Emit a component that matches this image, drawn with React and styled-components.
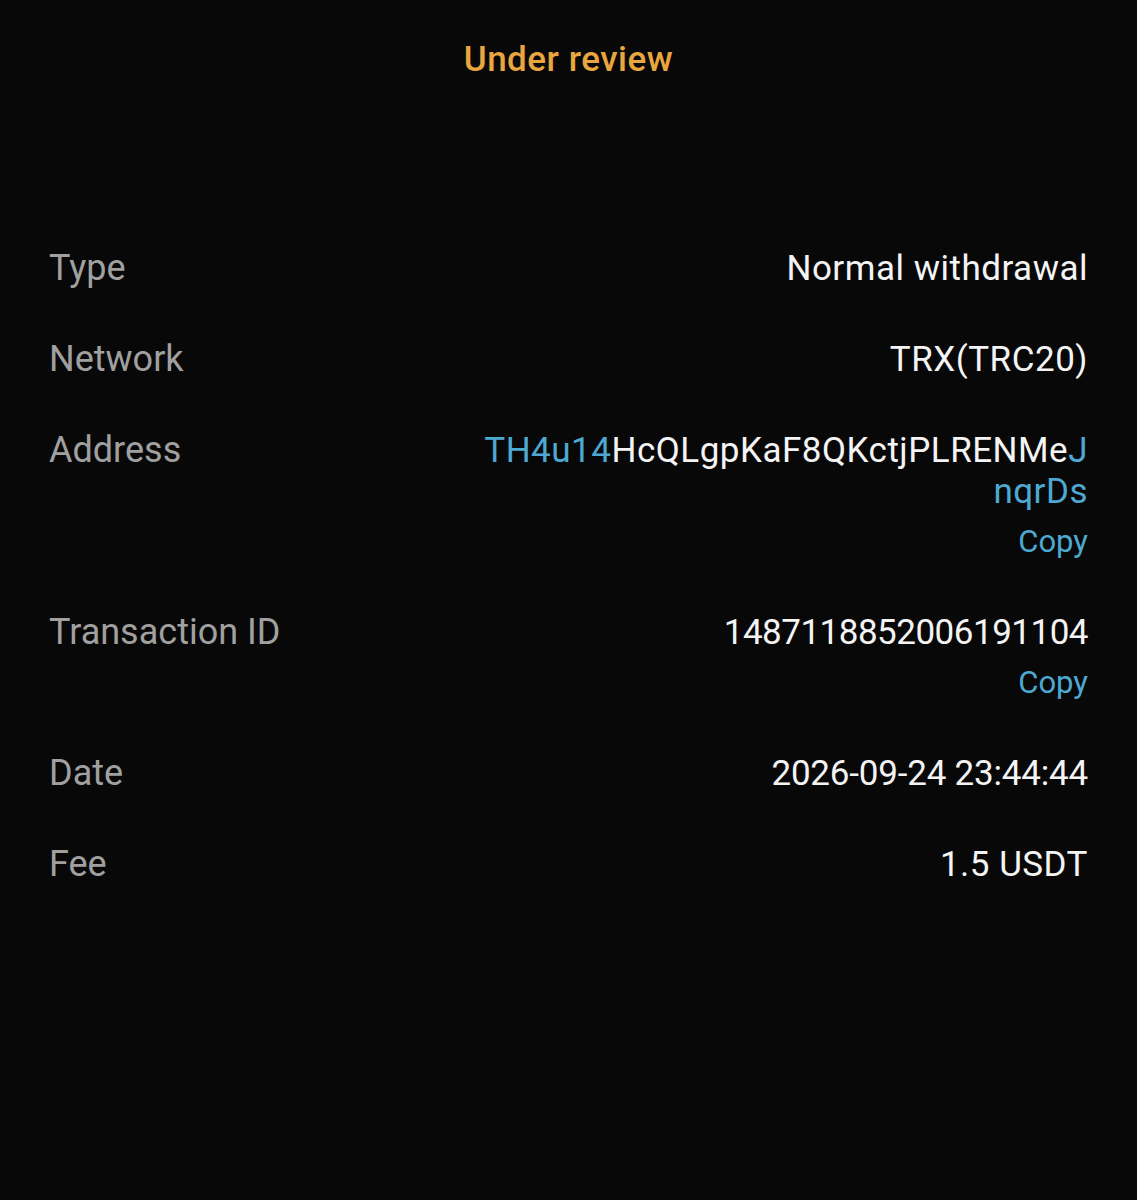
import styled, { createGlobalStyle } from 'styled-components';

const GlobalStyle = createGlobalStyle`
  html, body {
    margin: 0;
    padding: 0;
    background: #080808;
  }
  body {
    font-family: Roboto, "Noto Sans", sans-serif;
  }
`;

const Page = styled.div`
  min-height: 1200px;
  background: #080808;
  padding: 38px 49px 0;
  box-sizing: border-box;
`;

const Status = styled.h1`
  margin: 0;
  text-align: center;
  color: #e9a53f;
  font-size: 35px;
  font-weight: 500;
  line-height: 44px;
  letter-spacing: 0.5px;
`;

const List = styled.div`
  display: flex;
  flex-direction: column;
  gap: 50px;
  margin-top: 166px;
`;

const Row = styled.div`
  display: flex;
  justify-content: space-between;
  align-items: flex-start;
  gap: 40px;
`;

const Label = styled.div`
  color: #a0a0a0;
  font-size: 36px;
  line-height: 41px;
  white-space: nowrap;
`;

const ValueCol = styled.div`
  display: flex;
  flex-direction: column;
  align-items: flex-end;
  text-align: right;
`;

const Value = styled.div`
  color: #f4f4f4;
  font-size: 35px;
  line-height: 41px;
  letter-spacing: ${(p) => p.$spacing ?? '0.5px'};
`;

const Accent = styled.span`
  color: #4ea9d2;
`;

const CopyLink = styled.button`
  margin-top: 10px;
  padding: 0;
  border: none;
  background: none;
  color: #4ea9d2;
  font-family: inherit;
  font-size: 31px;
  line-height: 40px;
  cursor: pointer;
`;

const address = 'TH4u14HcQLgpKaF8QKctjPLRENMeJnqrDs';

function Address({ value }) {
  const head = value.slice(0, 6);
  const middle = value.slice(6, value.length - 6);
  const tail = value.slice(value.length - 6);
  return (
    <Value>
      <Accent>{head}</Accent>
      {middle}
      <Accent>{tail.slice(0, 1)}</Accent>
      <br />
      <Accent>{tail.slice(1)}</Accent>
    </Value>
  );
}

export default function App() {
  return (
    <>
      <GlobalStyle />
      <Page>
        <Status>Under review</Status>
        <List>
          <Row>
            <Label>Type</Label>
            <ValueCol>
              <Value>Normal withdrawal</Value>
            </ValueCol>
          </Row>
          <Row>
            <Label>Network</Label>
            <ValueCol>
              <Value>TRX(TRC20)</Value>
            </ValueCol>
          </Row>
          <Row>
            <Label>Address</Label>
            <ValueCol>
              <Address value={address} />
              <CopyLink>Copy</CopyLink>
            </ValueCol>
          </Row>
          <Row>
            <Label>Transaction ID</Label>
            <ValueCol>
              <Value $spacing="-0.5px">1487118852006191104</Value>
              <CopyLink>Copy</CopyLink>
            </ValueCol>
          </Row>
          <Row>
            <Label>Date</Label>
            <ValueCol>
              <Value $spacing="-0.2px">2026-09-24 23:44:44</Value>
            </ValueCol>
          </Row>
          <Row>
            <Label>Fee</Label>
            <ValueCol>
              <Value>1.5 USDT</Value>
            </ValueCol>
          </Row>
        </List>
      </Page>
    </>
  );
}
